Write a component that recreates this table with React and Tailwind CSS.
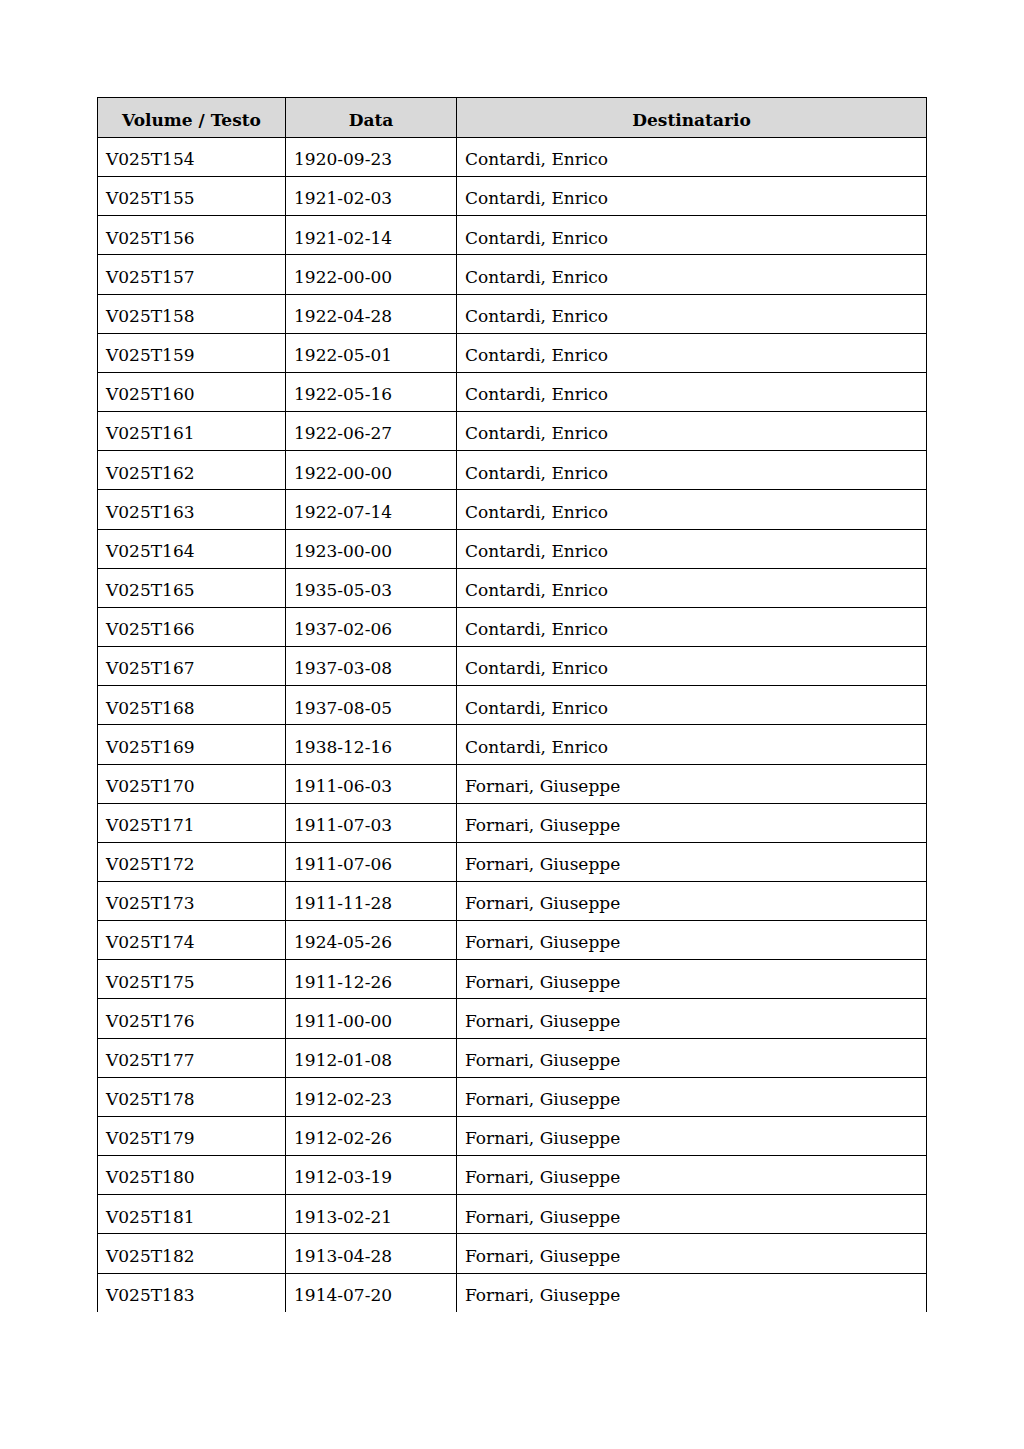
const rows = [
  ["V025T154", "1920-09-23", "Contardi, Enrico"],
  ["V025T155", "1921-02-03", "Contardi, Enrico"],
  ["V025T156", "1921-02-14", "Contardi, Enrico"],
  ["V025T157", "1922-00-00", "Contardi, Enrico"],
  ["V025T158", "1922-04-28", "Contardi, Enrico"],
  ["V025T159", "1922-05-01", "Contardi, Enrico"],
  ["V025T160", "1922-05-16", "Contardi, Enrico"],
  ["V025T161", "1922-06-27", "Contardi, Enrico"],
  ["V025T162", "1922-00-00", "Contardi, Enrico"],
  ["V025T163", "1922-07-14", "Contardi, Enrico"],
  ["V025T164", "1923-00-00", "Contardi, Enrico"],
  ["V025T165", "1935-05-03", "Contardi, Enrico"],
  ["V025T166", "1937-02-06", "Contardi, Enrico"],
  ["V025T167", "1937-03-08", "Contardi, Enrico"],
  ["V025T168", "1937-08-05", "Contardi, Enrico"],
  ["V025T169", "1938-12-16", "Contardi, Enrico"],
  ["V025T170", "1911-06-03", "Fornari, Giuseppe"],
  ["V025T171", "1911-07-03", "Fornari, Giuseppe"],
  ["V025T172", "1911-07-06", "Fornari, Giuseppe"],
  ["V025T173", "1911-11-28", "Fornari, Giuseppe"],
  ["V025T174", "1924-05-26", "Fornari, Giuseppe"],
  ["V025T175", "1911-12-26", "Fornari, Giuseppe"],
  ["V025T176", "1911-00-00", "Fornari, Giuseppe"],
  ["V025T177", "1912-01-08", "Fornari, Giuseppe"],
  ["V025T178", "1912-02-23", "Fornari, Giuseppe"],
  ["V025T179", "1912-02-26", "Fornari, Giuseppe"],
  ["V025T180", "1912-03-19", "Fornari, Giuseppe"],
  ["V025T181", "1913-02-21", "Fornari, Giuseppe"],
  ["V025T182", "1913-04-28", "Fornari, Giuseppe"],
  ["V025T183", "1914-07-20", "Fornari, Giuseppe"],
];

export default function App() {
  return (
    <div
      className="w-[1024px] h-[1449px] bg-white pt-[97px] pl-[97px] text-black"
      style={{ fontFamily: '"DejaVu Serif", "Liberation Serif", serif' }}
    >
      <table className="border-collapse table-fixed w-[829px] text-[17px]">
        <colgroup>
          <col className="w-[188px]" />
          <col className="w-[171px]" />
          <col className="w-[470px]" />
        </colgroup>
        <thead>
          <tr className="h-[40px] bg-[#d9d9d9]">
            <th className="border border-black font-bold text-center pt-[6px]">Volume / Testo</th>
            <th className="border border-black font-bold text-center pt-[6px]">Data</th>
            <th className="border border-black font-bold text-center pt-[6px]">Destinatario</th>
          </tr>
        </thead>
        <tbody>
          {rows.map((r, i) => {
            const last = i === rows.length - 1;
            return (
              <tr key={r[0]} className="h-[39.17px]">
                {r.map((c, j) => (
                  <td
                    key={j}
                    className={`border border-black pl-[8px] pt-[6px] align-middle ${last ? "border-b-0" : ""}`}
                  >
                    {c}
                  </td>
                ))}
              </tr>
            );
          })}
        </tbody>
      </table>
    </div>
  );
}
